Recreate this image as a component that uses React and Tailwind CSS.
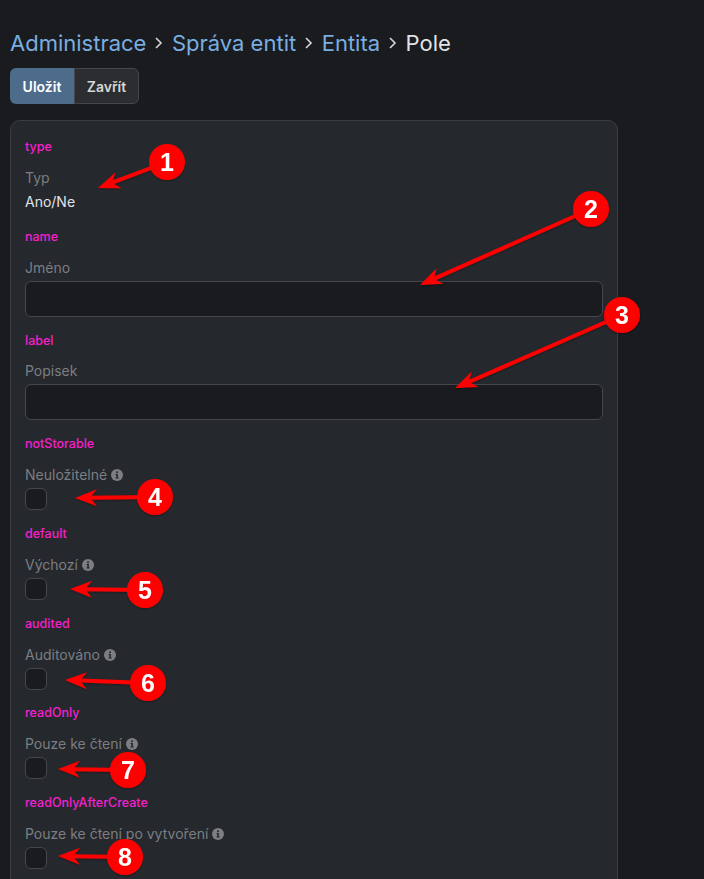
const arrows = [
  { n: 1, cx: 167, cy: 162, tx: 98, ty: 188 },
  { n: 2, cx: 591, cy: 209, tx: 420, ty: 285 },
  { n: 3, cx: 622, cy: 315, tx: 455, ty: 388 },
  { n: 4, cx: 155, cy: 497, tx: 75, ty: 498 },
  { n: 5, cx: 145, cy: 590, tx: 70, ty: 589 },
  { n: 6, cx: 148, cy: 683, tx: 65, ty: 680 },
  { n: 7, cx: 128, cy: 770, tx: 58, ty: 769 },
  { n: 8, cx: 125, cy: 857, tx: 58, ty: 856 },
];

const ArrowLayer = () => (
  <svg className="absolute inset-0 z-10" width="704" height="879" viewBox="0 0 704 879">
    <defs>
      <filter id="soft" x="-30%" y="-30%" width="160%" height="160%">
        <feDropShadow dx="0" dy="1" stdDeviation="1" floodColor="#000" floodOpacity="0.35" />
      </filter>
    </defs>
    {arrows.map((a) => {
      const dx = a.cx - a.tx;
      const dy = a.cy - a.ty;
      const len = Math.hypot(dx, dy);
      const ux = dx / len;
      const uy = dy / len;
      const px = -uy;
      const py = ux;
      const bx = a.tx + ux * 22;
      const by = a.ty + uy * 22;
      const nx = a.tx + ux * 15;
      const ny = a.ty + uy * 15;
      return (
        <g key={a.n} filter="url(#soft)">
          <line x1={nx} y1={ny} x2={a.cx} y2={a.cy} stroke="#f00" strokeWidth="4" />
          <polygon
            points={`${a.tx},${a.ty} ${bx + px * 8.5},${by + py * 8.5} ${nx},${ny} ${bx - px * 8.5},${by - py * 8.5}`}
            fill="#f00"
          />
          <circle cx={a.cx} cy={a.cy} r="18" fill="#f00" />
          <text
            x={a.cx}
            y={a.cy + 9}
            textAnchor="middle"
            fill="#fff"
            fontSize="25"
            fontWeight="700"
            fontFamily="'Liberation Sans', sans-serif"
          >
            {a.n}
          </text>
        </g>
      );
    })}
  </svg>
);

const InfoDot = () => (
  <svg width="12" height="12" viewBox="0 0 12 12">
    <circle cx="6" cy="6" r="6" fill="#7c7e82" />
    <rect x="5.1" y="2.4" width="1.8" height="1.7" fill="#25282d" />
    <path d="M4.5 5h2.4v3.6h0.8v1H4.4v-1h0.9V6H4.5z" fill="#25282d" />
  </svg>
);

const FieldName = ({ children }) => (
  <div className="text-[12.5px] leading-[16px] font-medium text-[#f520cc]">{children}</div>
);

const Label = ({ children, hint }) => (
  <div className="flex items-center gap-[4px] text-[14px] leading-[20px] text-[#7c7e82]">
    <span>{children}</span>
    {hint && <InfoDot />}
  </div>
);

const TextField = ({ name, label, className = '' }) => (
  <div className={className}>
    <FieldName>{name}</FieldName>
    <div className="mt-[12.5px]">
      <Label>{label}</Label>
    </div>
    <div className="mt-[3px] h-[36px] rounded-[6px] border border-[#44474c] bg-[#191b1f]"></div>
  </div>
);

const CheckField = ({ name, label, className = '' }) => (
  <div className={className}>
    <FieldName>{name}</FieldName>
    <div className="mt-[13px]">
      <Label hint>{label}</Label>
    </div>
    <div className="mt-[3px] w-[22px] h-[22px] rounded-[6px] border border-[#44474c] bg-[#191b1f]"></div>
  </div>
);

const Chevron = () => (
  <svg width="10" height="14" viewBox="0 0 10 14" fill="none" stroke="#d5d6d8" strokeWidth="1.6">
    <path d="M2 2l5 5-5 5" />
  </svg>
);

const App = () => {
  return (
    <div
      className="relative w-[704px] h-[879px] overflow-hidden bg-[#191b1f] pl-[10px] pt-[28px]"
      style={{ fontFamily: 'Inter, sans-serif' }}
    >
      {/* Breadcrumb */}
      <div className="flex items-center gap-[7.75px] text-[22px] leading-[30px] text-[#79aee0]">
        <span>Administrace</span>
        <Chevron />
        <span>Správa entit</span>
        <Chevron />
        <span>Entita</span>
        <Chevron />
        <span className="text-[#e2e3e5]">Pole</span>
      </div>

      {/* Buttons */}
      <div className="mt-[10px] flex h-[36px] w-fit text-[14px] font-semibold">
        <button className="w-[64px] rounded-l-[6px] bg-[#4d6c8c] text-white">Uložit</button>
        <button className="w-[65px] rounded-r-[6px] border border-[#44474c] bg-[#2c2d30] text-[#d5d6d8]">Zavřít</button>
      </div>

      {/* Card */}
      <div className="mt-[16px] w-[608px] h-[900px] rounded-[10px] border border-[#3a3d42] bg-[#25282d] px-[14px] pt-[18px]">
        <FieldName>type</FieldName>
        <div className="mt-[13px]">
          <Label>Typ</Label>
        </div>
        <div className="mt-[4px] text-[14px] leading-[20px] text-[#e2e3e5]">Ano/Ne</div>

        <TextField className="mt-[17px]" name="name" label="Jméno" />
        <TextField className="mt-[16px]" name="label" label="Popisek" />
        <CheckField className="mt-[16px]" name="notStorable" label="Neuložitelné" />
        <CheckField className="mt-[15.75px]" name="default" label="Výchozí" />
        <CheckField className="mt-[15.75px]" name="audited" label="Auditováno" />
        <CheckField className="mt-[15.75px]" name="readOnly" label="Pouze ke čtení" />
        <CheckField className="mt-[15.75px]" name="readOnlyAfterCreate" label="Pouze ke čtení po vytvoření" />
      </div>

      <ArrowLayer />
    </div>
  );
};

export default App;
